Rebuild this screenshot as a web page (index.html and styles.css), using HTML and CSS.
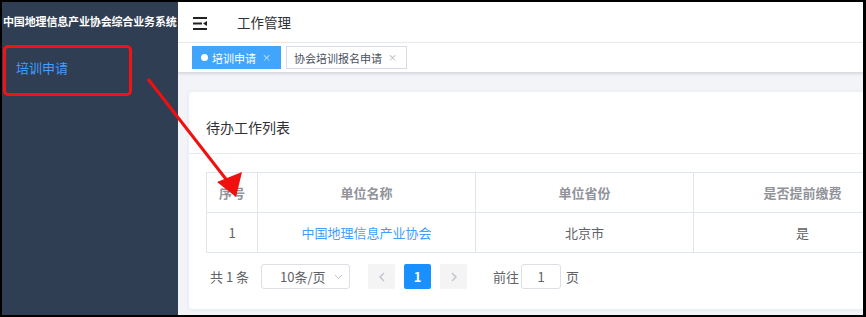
FILE: index.html
```html
<!DOCTYPE html>
<html lang="zh-CN">
<head>
<meta charset="utf-8"/>
<meta content="width=device-width, initial-scale=1.0" name="viewport"/>
<title>工作管理</title>
<link rel="stylesheet" href="styles.css">
</head>
<body>
<div class="screen">
  <aside class="sidebar">
    <div class="logo">中国地理信息产业协会综合业务系统</div>
    <ul class="menu">
      <li class="menu-item active">培训申请</li>
    </ul>
  </aside>
  <div class="main">
    <div class="navbar">
      <svg class="hamburger" width="15" height="13" viewBox="0 0 15 13">
        <rect x="0" y="0" width="14" height="2" fill="#222"/>
        <rect x="0" y="5.5" width="9" height="2" fill="#222"/>
        <polygon points="10,6.5 14,4 14,9" fill="#222"/>
        <rect x="0" y="11" width="14" height="2" fill="#222"/>
      </svg>
      <span class="breadcrumb">工作管理</span>
    </div>
    <div class="tags-view">
      <span class="tag active"><i class="dot"></i>培训申请<span class="close">×</span></span>
      <span class="tag">协会培训报名申请<span class="close">×</span></span>
    </div>
    <div class="app-main">
      <div class="card">
        <div class="card-header">待办工作列表</div>
        <div class="card-body">
          <table class="table">
            <colgroup>
              <col class="c-index"><col class="c-wide"><col class="c-wide"><col class="c-wide">
            </colgroup>
            <thead>
              <tr><th>序号</th><th>单位名称</th><th>单位省份</th><th>是否提前缴费</th></tr>
            </thead>
            <tbody>
              <tr><td>1</td><td class="link">中国地理信息产业协会</td><td>北京市</td><td>是</td></tr>
            </tbody>
          </table>
          <div class="pagination">
            <span class="total">共 1 条</span>
            <span class="sizes">10条/页
              <svg class="chevron" width="9" height="6" viewBox="0 0 9 6"><polyline points="1,1 4.5,4.5 8,1" fill="none" stroke="#c0c4cc" stroke-width="1"/></svg>
            </span>
            <span class="btn-page">
              <svg width="6" height="10" viewBox="0 0 6 10"><polyline points="5,1 1,5 5,9" fill="none" stroke="#c0c4cc" stroke-width="1.5"/></svg>
            </span>
            <span class="pager-num active">1</span>
            <span class="btn-page">
              <svg width="6" height="10" viewBox="0 0 6 10"><polyline points="1,1 5,5 1,9" fill="none" stroke="#c0c4cc" stroke-width="1.5"/></svg>
            </span>
            <span class="jump">前往</span>
            <span class="jump-input">1</span>
            <span class="jump-unit">页</span>
          </div>
        </div>
      </div>
    </div>
  </div>
</div>
<div class="highlight"></div>
<svg class="arrow" width="866" height="317" viewBox="0 0 866 317">
  <line x1="148" y1="79" x2="229" y2="183" stroke="#f01010" stroke-width="3"/>
  <polygon points="217,182 242,172 236,197" fill="#f01010"/>
</svg>
</body>
</html>
```

FILE: styles.css
```css
* {
  box-sizing: border-box;
}

body {
  margin: 0;
  width: 866px;
  height: 317px;
  overflow: hidden;
  position: relative;
  background: #000;
  font-family: "Noto Sans CJK SC", "Liberation Sans", sans-serif;
  color: #303133;
}

.screen {
  display: flex;
  width: 866px;
  height: 317px;
  border: 2px solid #000;
  border-right-width: 3px;
  background: #fff;
}

.sidebar {
  width: 176px;
  flex-shrink: 0;
  background: #2f3e53;
}

.logo {
  height: 38px;
  line-height: 38px;
  color: #fff;
  font-size: 11px;
  font-weight: bold;
  white-space: nowrap;
  letter-spacing: -0.15px;
  padding-left: 1px;
}

.menu {
  list-style: none;
  margin: 0;
  padding: 0;
}

.menu-item {
  height: 56px;
  line-height: 56px;
  padding-left: 14px;
  font-size: 13px;
  color: #bfcbd9;
}

.menu-item.active {
  color: #409eff;
}

.main {
  flex: 1;
  min-width: 0;
  display: flex;
  flex-direction: column;
  overflow: hidden;
  box-shadow: inset 6px 0 8px -6px rgba(0, 0, 0, 0.15);
}

.navbar {
  height: 41px;
  flex-shrink: 0;
  display: flex;
  align-items: center;
  padding-left: 15px;
  background: #fff;
  border-bottom: 1px solid #eef0f3;
}

.hamburger {
  margin-top: 2px;
}

.breadcrumb {
  margin-left: 29px;
  font-size: 13.5px;
  color: #303133;
}

.tags-view {
  height: 30px;
  flex-shrink: 0;
  display: flex;
  align-items: flex-start;
  padding: 3px 0 0 14px;
  background: #fff;
  border-bottom: 1px solid #d8dce5;
  box-shadow: 0 1px 3px rgba(0, 0, 0, 0.1), 0 0 3px rgba(0, 0, 0, 0.04);
  position: relative;
  z-index: 1;
}

.tag {
  display: inline-flex;
  align-items: center;
  height: 23px;
  padding: 0 9px 0 7px;
  margin-right: 5px;
  font-size: 11px;
  color: #495060;
  background: #fff;
  border: 1px solid #d8dce5;
}

.tag.active {
  background: #42a5fc;
  border-color: #42a5fc;
  color: #fff;
  padding-left: 8px;
}

.dot {
  display: inline-block;
  width: 7px;
  height: 7px;
  border-radius: 50%;
  background: #fff;
  margin-right: 4px;
}

.close {
  margin-left: 6px;
  font-size: 9px;
  color: #aaa;
}

.tag.active .close {
  color: #dcebff;
}

.app-main {
  flex: 1;
  padding: 18px 0 0 10px;
  background: #f3f4f7;
  overflow: hidden;
}

.card {
  width: 1000px;
  height: 219px;
  background: #fff;
  border: 1px solid #ebeef5;
  border-radius: 4px;
  box-shadow: 0 1px 4px rgba(0, 0, 0, 0.04);
}

.card-header {
  height: 62px;
  padding: 25px 0 0 17px;
  font-size: 14px;
  line-height: 20px;
  color: #303133;
  border-bottom: 1px solid #e6ebf0;
}

.card-body {
  padding: 18px 0 0 17px;
}

.table {
  border-collapse: collapse;
  table-layout: fixed;
  width: 705px;
  font-size: 13px;
}

.c-index {
  width: 51px;
}

.c-wide {
  width: 218px;
}

.table th,
.table td {
  height: 40px;
  padding: 0;
  text-align: center;
  border: 1px solid #dfe6ec;
  white-space: nowrap;
}

.table th {
  color: #909399;
  font-weight: bold;
}

.table td {
  color: #606266;
}

.table td.link {
  color: #409eff;
}

.pagination {
  display: flex;
  align-items: center;
  margin-top: 11px;
  height: 25px;
  font-size: 13px;
  color: #606266;
}

.total {
  margin-left: 4px;
}

.sizes {
  position: relative;
  width: 89px;
  height: 25px;
  line-height: 23px;
  margin-left: 12px;
  padding-left: 18px;
  border: 1px solid #dcdfe6;
  border-radius: 3px;
}

.chevron {
  position: absolute;
  right: 6px;
  top: 9px;
}

.btn-page,
.pager-num {
  display: inline-flex;
  align-items: center;
  justify-content: center;
  width: 27px;
  height: 25px;
  background: #f4f4f5;
  border-radius: 2px;
}

.btn-page {
  margin-right: 9px;
}

.sizes + .btn-page {
  margin-left: 18px;
}

.pager-num {
  margin-right: 9px;
  font-weight: bold;
  color: #606266;
}

.pager-num.active {
  background: #1890ff;
  color: #fff;
}

.jump {
  margin-left: 17px;
}

.jump-input {
  width: 40px;
  height: 25px;
  line-height: 23px;
  margin-left: 2px;
  text-align: center;
  border: 1px solid #dcdfe6;
  border-radius: 3px;
}

.jump-unit {
  margin-left: 5px;
}

.highlight {
  position: absolute;
  left: 3px;
  top: 45px;
  width: 129px;
  height: 51px;
  border: 3px solid #f21414;
  border-radius: 5px;
}

.arrow {
  position: absolute;
  left: 0;
  top: 0;
  pointer-events: none;
}
```
